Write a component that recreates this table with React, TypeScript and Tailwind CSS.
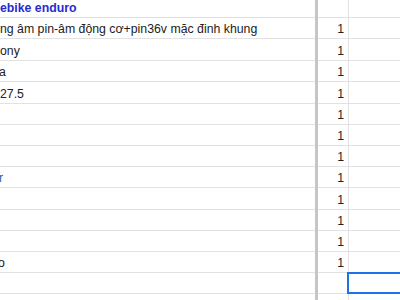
const rows: {
  h: string
  text?: string
  tone?: "head" | "link" | "plain"
  shift?: string
  count?: boolean
  selected?: boolean
}[] = [
  { h: "h-[18px]", text: "ebike enduro", tone: "head" },
  { h: "h-[21px]", text: "ng âm pin-âm động cơ+pin36v mặc đinh khung", count: true },
  { h: "h-[22px]", text: "ony", count: true },
  { h: "h-[21px]", text: "a", shift: "ml-[-1px]", count: true },
  { h: "h-[22px]", text: "27.5", count: true },
  { h: "h-[21px]", count: true },
  { h: "h-[21px]", count: true },
  { h: "h-[21px]", count: true },
  { h: "h-[21px]", text: "r", tone: "link", shift: "ml-[-1px]", count: true },
  { h: "h-[22px]", count: true },
  { h: "h-[21px]", count: true },
  { h: "h-[21px]", count: true },
  { h: "h-[21px]", text: "o", shift: "ml-[-2px]", count: true },
  { h: "h-[21px]", selected: true },
  { h: "h-[21px]" },
]

export default function App() {
  return (
    <div
      className="w-[400px] h-[300px] overflow-hidden bg-white text-[12.3px] text-[#222222]"
      style={{ fontFamily: '"Liberation Sans", Arial, sans-serif' }}
    >
      {rows.map((r, i) => (
        <div key={i} className={`flex ${r.h} shrink-0`}>
          {/* text column */}
          <div className="w-[315px] shrink-0 overflow-hidden border-b border-[#e2e2e2] flex items-end pb-[1px]">
            {r.text && (
              <span
                className={`whitespace-nowrap leading-[16px] ${r.shift ?? ""} ${
                  r.tone === "head"
                    ? "font-bold text-[#2a2ad0]"
                    : r.tone === "link"
                      ? "text-[#1c5fb8]"
                      : ""
                }`}
              >
                {r.text}
              </span>
            )}
          </div>

          {/* frozen divider */}
          <div className="w-[3px] shrink-0 bg-[#c6c6c6]" />

          {/* quantity column */}
          <div className="w-[31px] shrink-0 border-b border-r border-[#e2e2e2] flex items-end justify-end pr-[4px] pb-[1px]">
            {r.count && <span className="leading-[16px]">1</span>}
          </div>

          {/* empty column */}
          <div className="relative flex-1 border-b border-[#e2e2e2]">
            {r.selected && (
              <div className="absolute -left-[2px] -top-[1px] -bottom-[1px] -right-[4px] border-2 border-[#1a73e8]" />
            )}
          </div>
        </div>
      ))}
    </div>
  )
}
